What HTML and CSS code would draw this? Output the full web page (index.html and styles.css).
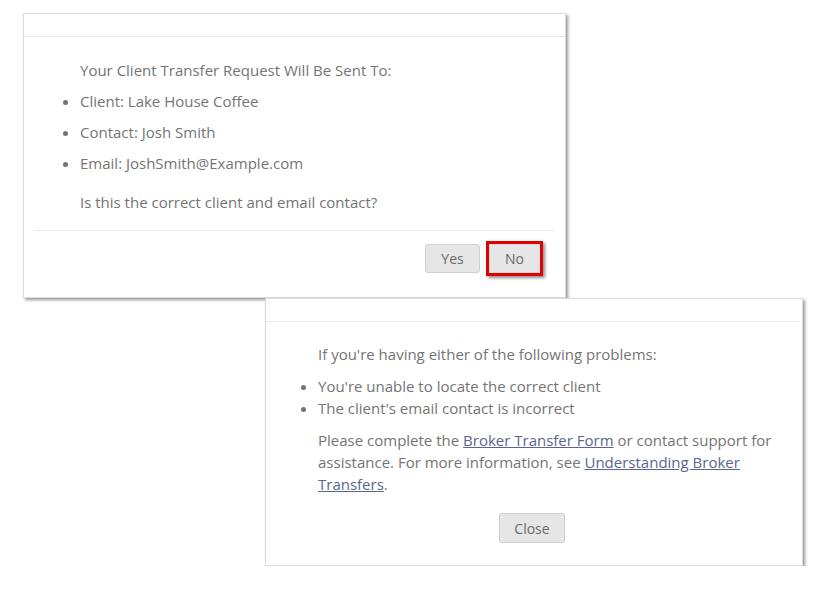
FILE: index.html
```html
<!DOCTYPE html>
<html>
<head>
<meta charset="utf-8">
<link rel="stylesheet" href="styles.css">
</head>
<body>
<div class="dialog dialog-confirm">
  <div class="dialog-header"></div>
  <div class="dialog-content">
    <p class="intro">Your Client Transfer Request Will Be Sent To:</p>
    <ul class="details">
      <li>Client: Lake House Coffee</li>
      <li>Contact: Josh Smith</li>
      <li>Email: JoshSmith@Example.com</li>
    </ul>
    <p class="question">Is this the correct client and email contact?</p>
    <div class="dialog-footer">
      <button class="btn">Yes</button>
      <span class="highlight"><button class="btn btn-no">No</button></span>
    </div>
  </div>
</div>
<div class="dialog dialog-help">
  <div class="dialog-header"></div>
  <div class="help-body">
    <p class="intro">If you're having either of the following problems:</p>
    <ul class="problems">
      <li>You're unable to locate the correct client</li>
      <li>The client's email contact is incorrect</li>
    </ul>
    <p class="para">Please complete the <a href="#">Broker Transfer Form</a> or contact support for assistance. For more information, see <a href="#">Understanding Broker Transfers</a>.</p>
    <div class="center">
      <button class="btn btn-close">Close</button>
    </div>
  </div>
</div>
</body>
</html>
```

FILE: styles.css
```css
html, body {
  margin: 0;
  padding: 0;
  background: #ffffff;
}
body {
  font-family: "Open Sans", "Liberation Sans", sans-serif;
  font-size: 15px;
  color: #747474;
  padding-top: 13px;
}
p, ul {
  margin: 0;
}
.dialog {
  background: #fff;
  border: 1px solid #dcdcdc;
  box-shadow: 2px 2px 3px rgba(0, 0, 0, 0.4);
  box-sizing: border-box;
  position: relative;
}
.dialog-confirm {
  margin-left: 23px;
  width: 543px;
  height: 285px;
}
.dialog-help {
  margin-left: 265px;
  width: 538px;
  height: 268px;
  z-index: 2;
}
.dialog-header {
  height: 22px;
  border-bottom: 1px solid #e9e9e9;
}
.dialog-content {
  padding: 0 10px;
}
.intro {
  line-height: 20px;
}
.dialog-confirm .intro {
  margin-top: 23px;
  padding-left: 46px;
}
.details {
  padding-left: 46px;
  margin-top: 11px;
  line-height: 20px;
}
.details li {
  margin-bottom: 11px;
}
.question {
  padding-left: 46px;
  margin-top: 19px;
  line-height: 20px;
}
.dialog-footer {
  margin-top: 18px;
  border-top: 1px solid #e9e9e9;
  display: flex;
  justify-content: flex-end;
  align-items: center;
  gap: 6px;
  padding: 10px 12px 0 0;
}
.btn {
  font-family: "Open Sans", "Liberation Sans", sans-serif;
  font-size: 14px;
  color: #6a6a6a;
  background: #e6e6e6;
  border: 1px solid #cfcfcf;
  border-radius: 3px;
  width: 55px;
  height: 29px;
  padding: 0;
  margin: 0;
}
.highlight {
  display: flex;
  border: 3px solid #e50000;
  box-shadow: 2px 2px 3px rgba(0, 0, 0, 0.45);
}
.btn-no {
  width: 51px;
  height: 29px;
  border-radius: 0;
  border-color: #dadada;
}
.help-body {
  padding: 0 0 0 52px;
}
.dialog-help .intro {
  margin-top: 22px;
}
.problems {
  margin-top: 11px;
  padding-left: 0;
  line-height: 22px;
}
.para {
  margin-top: 10px;
  line-height: 22px;
  width: 468px;
}
.para a {
  color: #5a6690;
  text-decoration: underline;
}
.center {
  display: flex;
  justify-content: center;
  margin-left: -56px;
  margin-top: 18px;
}
.btn-close {
  width: 66px;
  height: 30px;
}
```
